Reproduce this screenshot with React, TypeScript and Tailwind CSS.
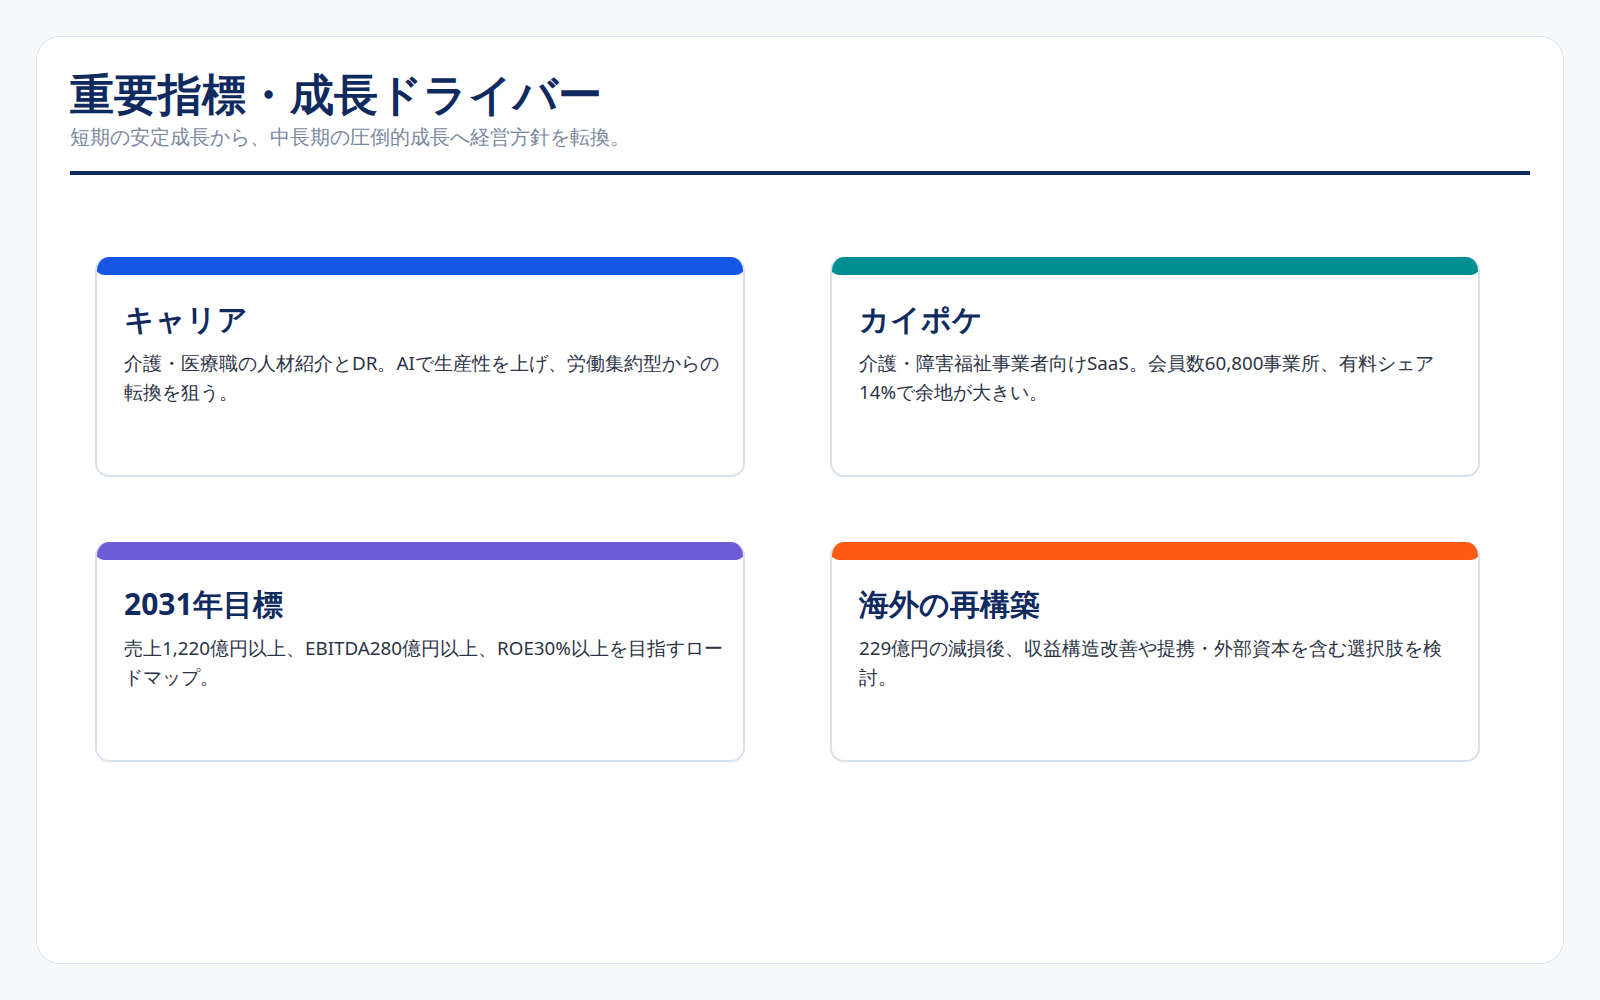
import React from 'react';

const cards = [
  { title: 'キャリア', bar: 'bg-[#1556e4]', text: '介護・医療職の人材紹介とDR。AIで生産性を上げ、労働集約型からの転換を狙う。' },
  { title: 'カイポケ', bar: 'bg-[#008f91]', text: '介護・障害福祉事業者向けSaaS。会員数60,800事業所、有料シェア14%で余地が大きい。' },
  { title: '2031年目標', bar: 'bg-[#6e5cd6]', text: '売上1,220億円以上、EBITDA280億円以上、ROE30%以上を目指すロードマップ。' },
  { title: '海外の再構築', bar: 'bg-[#ff5b14]', text: '229億円の減損後、収益構造改善や提携・外部資本を含む選択肢を検討。' },
];

const App = () => {
  return (
    <div className="min-h-screen bg-[#f6f8fb] p-[36px] font-['Noto_Sans_CJK_JP','Noto_Sans',sans-serif]">
      <div className="h-[928px] bg-white border border-[#d8e1ee] rounded-[24px] px-[33px] pt-[26px]">
        <h1 className="text-[44px] leading-[60px] font-bold text-[#0f2a5f]">重要指標・成長ドライバー</h1>
        <p className="text-[19.5px] leading-[28px] text-[#7a889e] mt-[0px]">短期の安定成長から、中長期の圧倒的成長へ経営方針を転換。</p>
        <div className="h-[4px] bg-[#0f2a5f] mt-[20px]" />
        <div className="grid grid-cols-2 gap-x-[85px] gap-y-[65px] pl-[25px] pr-[50px] mt-[82px]">
          {cards.map((c) => (
            <div key={c.title} className="h-[220px] bg-white border-2 border-t-0 border-[#d8e1ee] rounded-[14px] overflow-hidden">
              <div className={`h-[18px] rounded-full ${c.bar} -mx-[2px]`} />
              <div className="pl-[27px] pr-[20px] pt-[24px]">
                <h2 className="text-[30px] leading-[40px] font-bold text-[#0f2a5f]">{c.title}</h2>
                <p className="text-[18.8px] leading-[29px] text-[#2b3445] mt-[10px]">{c.text}</p>
              </div>
            </div>
          ))}
        </div>
      </div>
    </div>
  );
};

export default App;
